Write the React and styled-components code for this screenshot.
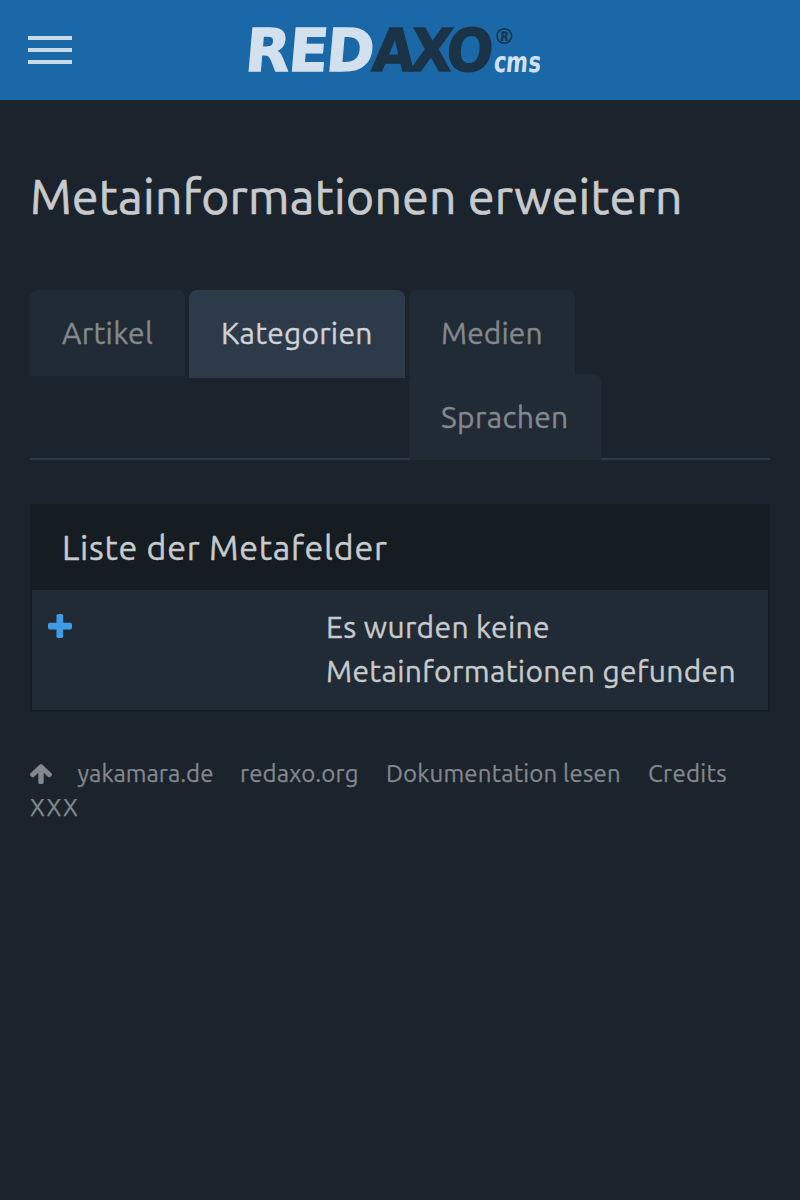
import React from "react";
import styled, { createGlobalStyle } from "styled-components";

const GlobalStyle = createGlobalStyle`
  * { box-sizing: border-box; }
  body {
    margin: 0;
    min-height: 100vh;
    background: #1b232c;
    color: #c8cacc;
    font-family: Ubuntu, "Noto Sans", sans-serif;
    font-size: 30px;
    line-height: 44px;
  }
`;

const TopBar = styled.header`
  display: flex;
  align-items: flex-start;
  height: 100px;
  background: #1a68a7;
`;

const MenuButton = styled.button`
  display: flex;
  flex-direction: column;
  gap: 8px;
  width: 44px;
  margin: 36px 0 0 28px;
  padding: 0;
  border: 0;
  background: none;
`;

const MenuBar = styled.span`
  height: 4px;
  background: #c8d9e7;
`;

const Brand = styled.svg`
  width: 320px;
  height: 84px;
  margin: 8px 0 0 163px;
  overflow: visible;
  font-family: "DejaVu Sans", sans-serif;
  font-weight: bold;
`;

const Main = styled.main`
  padding: 0 30px;
  -webkit-text-stroke: 0.35px;
`;

const PageTitle = styled.h1`
  margin: 66px 0 64px;
  font-size: 48px;
  font-weight: 400;
  line-height: 60px;
  letter-spacing: 0.32px;
  -webkit-text-stroke-width: 0.7px;
`;

const Tabs = styled.ul`
  display: flow-root;
  margin: 0 0 44px;
  padding: 0;
  list-style: none;
  border-bottom: 2px solid #2d3a4a;
`;

const TabItem = styled.li`
  float: left;
  margin-bottom: -2px;
`;

const TabLink = styled.a`
  display: block;
  width: ${(p) => p.$width}px;
  height: ${(p) => (p.$active ? 88 : 86)}px;
  margin-right: 4px;
  padding: 21px 0 0 32px;
  border-radius: 8px 8px 0 0;
  background: ${(p) => (p.$active ? "#2d3a4a" : "#202b35")};
  color: ${(p) => (p.$active ? "#d0d2d5" : "#83888d")};
  letter-spacing: ${(p) => p.$spacing}px;
  white-space: nowrap;
`;

const Panel = styled.section`
  margin-bottom: 44px;
  border: 2px solid #151c22;
  background: #202b35;
`;

const PanelHeader = styled.header`
  height: 84px;
  padding: 19px 30px;
  background: #151c22;
  font-size: 34px;
  letter-spacing: 0.74px;
  -webkit-text-stroke-width: 0.4px;
`;

const PanelRow = styled.div`
  display: grid;
  grid-template-columns: 278px 1fr;
  height: 120px;
  padding: 15px 16px;
  letter-spacing: 0.35px;
`;

const AddIcon = styled.svg`
  width: 24px;
  height: 24px;
  margin-top: 9px;
  fill: #409be4;
`;

const Footer = styled.footer`
  display: grid;
  grid-template-columns: 47.5px 162.5px 146px 262px 1fr;
  padding-top: 1px;
  color: #84888c;
  font-size: 24px;
  line-height: 34px;
  -webkit-text-stroke-width: 0.25px;
`;

const FooterItem = styled.a`
  letter-spacing: ${(p) => p.$spacing}px;
  white-space: nowrap;
`;

const UpIcon = styled.svg`
  display: block;
  width: 22px;
  height: 20px;
  margin-top: 7px;
  fill: currentColor;
`;

const tabs = [
  { label: "Artikel", width: 155, spacing: 0.3 },
  { label: "Kategorien", width: 216, spacing: 0.25, active: true },
  { label: "Medien", width: 166, spacing: 0.1 },
  { label: "Sprachen", width: 192, spacing: 0.35 },
];

const footerLinks = [
  { label: "yakamara.de", spacing: 0 },
  { label: "redaxo.org", spacing: 0.14 },
  { label: "Dokumentation lesen", spacing: 0.17 },
  { label: "Credits", spacing: 0.3 },
  { label: "XXX", spacing: 1.2 },
];

function Logo() {
  return (
    <Brand viewBox="-10 -12 320 84" aria-label="REDAXO CMS">
      <g fontSize="59" strokeWidth="1.4">
        <text
          transform="translate(0 51) skewX(-5) scale(.98 1)"
          x="-1 43 81.3"
          fill="#d2e1ed"
          stroke="#d2e1ed"
        >
          RED
        </text>
        <text
          transform="translate(0 51) skewX(-5) scale(.93 1)"
          x="135.5 176 215"
          fill="#1a3347"
          stroke="#1a3347"
        >
          AXO
        </text>
      </g>
      <circle cx="259.3" cy="16" r="7.3" fill="none" stroke="#1a3347" strokeWidth="1.6" />
      <text
        transform="translate(255 20.7) skewX(-5) scale(.85 1)"
        x="0"
        fontSize="13"
        fill="#1a3347"
      >
        R
      </text>
      <text
        transform="translate(249 51.7) skewX(-5) scale(.74 1)"
        x="-1 15.3 45.5"
        fontSize="28.5"
        fill="#d2e1ed"
      >
        cms
      </text>
    </Brand>
  );
}

export default function App() {
  return (
    <>
      <GlobalStyle />
      <TopBar>
        <MenuButton aria-label="Menü">
          <MenuBar />
          <MenuBar />
          <MenuBar />
        </MenuButton>
        <Logo />
      </TopBar>
      <Main>
        <PageTitle>Metainformationen erweitern</PageTitle>
        <Tabs>
          {tabs.map((t) => (
            <TabItem key={t.label}>
              <TabLink $width={t.width} $spacing={t.spacing} $active={t.active}>
                {t.label}
              </TabLink>
            </TabItem>
          ))}
        </Tabs>
        <Panel>
          <PanelHeader>Liste der Metafelder</PanelHeader>
          <PanelRow>
            <AddIcon viewBox="0 0 24 24">
              <rect x="8.5" width="6.700" height="24" rx="1.600" />
              <rect y="8.700" width="24" height="6.700" rx="1.600" />
            </AddIcon>
            <span>Es wurden keine Metainformationen gefunden</span>
          </PanelRow>
        </Panel>
        <Footer>
          <FooterItem aria-label="Nach oben">
            <UpIcon viewBox="117 192 1558 1472" preserveAspectRatio="none">
              <path d="M1675 971q0 51-37 90l-75 75q-38 38-91 38-54 0-90-38l-294-293v704q0 52-37.500 84.500t-90.500 32.500h-128q-53 0-90.500-32.500t-37.500-84.500v-704l-294 293q-36 38-90 38t-90-38l-75-75q-38-38-38-90 0-53 38-91l651-651q35-37 90-37 54 0 91 37l651 651q37 39 37 91z" />
            </UpIcon>
          </FooterItem>
          {footerLinks.map((l) => (
            <FooterItem key={l.label} $spacing={l.spacing}>
              {l.label}
            </FooterItem>
          ))}
        </Footer>
      </Main>
    </>
  );
}
